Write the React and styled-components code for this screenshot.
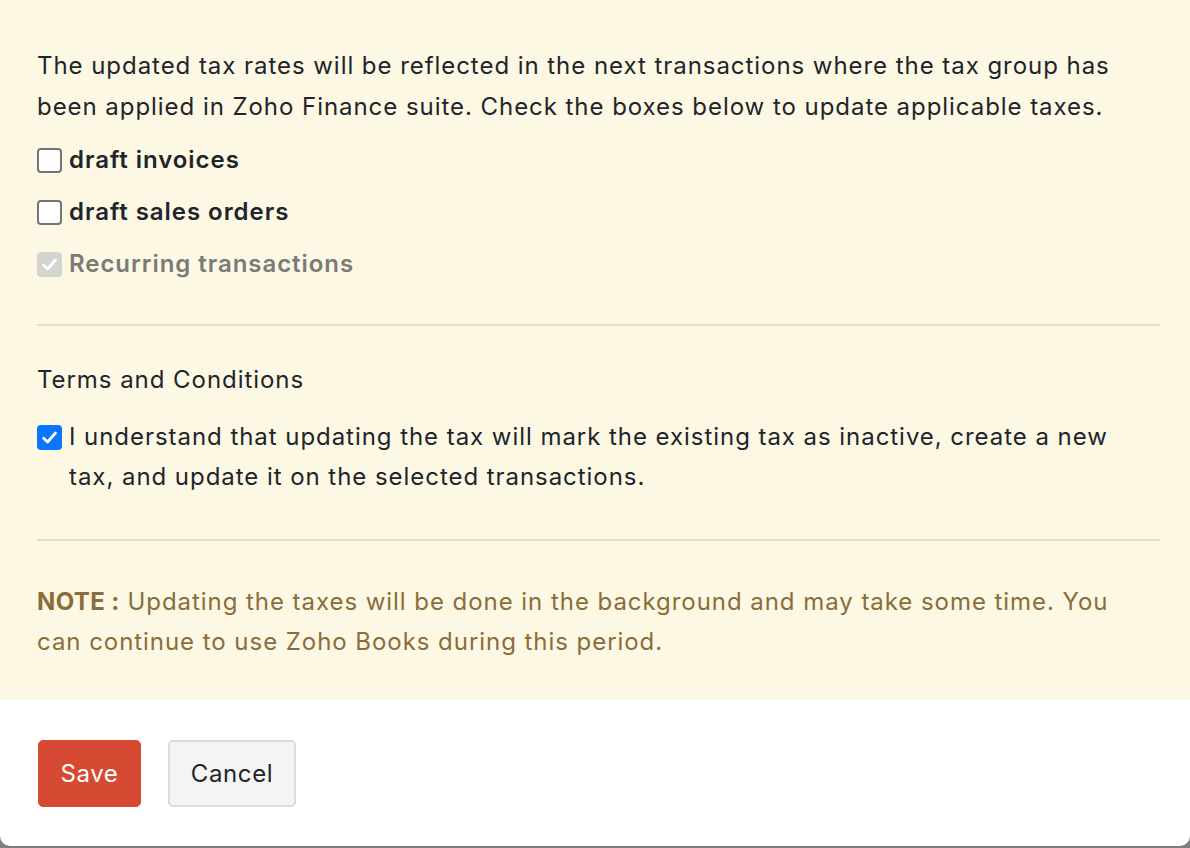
import { useState } from 'react';
import styled, { createGlobalStyle } from 'styled-components';

const GlobalStyle = createGlobalStyle`
  html, body {
    margin: 0;
    padding: 0;
    background: #7d7e82;
  }
  body {
    font-family: Inter, "Noto Sans", "Liberation Sans", sans-serif;
    color: #21252b;
  }
`;

const Dialog = styled.div`
  width: 1190px;
  height: 846px;
  background: #ffffff;
  border-radius: 0 0 10px 10px;
  overflow: hidden;
  display: flex;
  flex-direction: column;
`;

const WarningPanel = styled.div`
  background: #fcf8e3;
  padding: 46px 30px 37px 37px;
  font-size: 24px;
  line-height: 40.5px;
  letter-spacing: 0.95px;
`;

const Paragraph = styled.p`
  margin: 0;
`;

const OptionList = styled.div`
  margin-top: 7px;
  display: flex;
  flex-direction: column;
`;

const OptionRow = styled.label`
  display: flex;
  align-items: ${(p) => (p.$top ? 'flex-start' : 'center')};
  gap: 7px;
  min-height: ${(p) => (p.$top ? 'auto' : '52px')};
  margin-top: ${(p) => (p.$top ? '16px' : '0')};
  font-weight: ${(p) => (p.$bold ? 600 : 400)};
  color: ${(p) => (p.$disabled ? '#7a7a78' : '#21252b')};
  cursor: ${(p) => (p.$disabled ? 'default' : 'pointer')};
`;

const Box = styled.span`
  flex: none;
  width: 25px;
  height: 25px;
  box-sizing: border-box;
  border-radius: 4px;
  display: flex;
  align-items: center;
  justify-content: center;
  margin-top: ${(p) => (p.$top ? '8px' : '0')};
  border: ${(p) => (p.$checked ? 'none' : '2px solid #747474')};
  background: ${(p) =>
    !p.$checked ? '#ffffff' : p.$disabled ? '#d4d4d0' : '#0b75ff'};

  svg {
    width: 17px;
    height: 17px;
  }
`;

const Divider = styled.hr`
  border: none;
  height: 2px;
  background: #e2dfcc;
  margin: ${(p) => p.$margin};
`;

const SectionTitle = styled.div`
  font-weight: 400;
`;

const TermsText = styled.span`
  line-height: 40.5px;
`;

const Note = styled.p`
  margin: 0;
  color: #8a6d3b;
`;

const NoteLabel = styled.strong`
  font-weight: 700;
  letter-spacing: 0.4px;
`;

const Footer = styled.div`
  display: flex;
  gap: 27px;
  padding: 40px 38px 39px;
`;

const Button = styled.button`
  font-family: inherit;
  font-size: 24px;
  letter-spacing: 0.6px;
  height: 67px;
  padding: 0 20px;
  border-radius: 5px;
  cursor: pointer;
  border: ${(p) => (p.$primary ? '1px solid #d64a33' : '2px solid #dcdcdc')};
  background: ${(p) => (p.$primary ? '#d64a33' : '#f4f4f4')};
  color: ${(p) => (p.$primary ? '#ffffff' : '#21252b')};
  min-width: ${(p) => (p.$primary ? '103px' : '128px')};
`;

function Check({ checked, disabled, top, onToggle }) {
  return (
    <Box $checked={checked} $disabled={disabled} $top={top} onClick={onToggle}>
      {checked && (
        <svg viewBox="0 0 16 16" fill="none">
          <path
            d="M2.5 8.6 L6.2 12.2 L13.6 3.8"
            stroke="#ffffff"
            strokeWidth="2.6"
            strokeLinecap="round"
            strokeLinejoin="round"
          />
        </svg>
      )}
    </Box>
  );
}

export default function App() {
  const [invoices, setInvoices] = useState(false);
  const [salesOrders, setSalesOrders] = useState(false);
  const [agree, setAgree] = useState(true);

  return (
    <>
      <GlobalStyle />
      <Dialog>
        <WarningPanel>
          <Paragraph>
            The updated tax rates will be reflected in the next transactions where the tax group has
            <br />
            been applied in Zoho Finance suite. Check the boxes below to update applicable taxes.
          </Paragraph>
          <OptionList>
            <OptionRow $bold>
              <Check checked={invoices} onToggle={() => setInvoices(!invoices)} />
              draft invoices
            </OptionRow>
            <OptionRow $bold>
              <Check checked={salesOrders} onToggle={() => setSalesOrders(!salesOrders)} />
              draft sales orders
            </OptionRow>
            <OptionRow $bold $disabled>
              <Check checked disabled />
              Recurring transactions
            </OptionRow>
          </OptionList>

          <Divider $margin="34px 0 34px" />

          <SectionTitle>Terms and Conditions</SectionTitle>
          <OptionRow $top>
            <Check checked={agree} top onToggle={() => setAgree(!agree)} />
            <TermsText>
              I understand that updating the tax will mark the existing tax as inactive, create a new
              <br />
              tax, and update it on the selected transactions.
            </TermsText>
          </OptionRow>

          <Divider $margin="41px 0 41px" />

          <Note>
            <NoteLabel>NOTE :</NoteLabel> Updating the taxes will be done in the background and may take some time. You
            <br />
            can continue to use Zoho Books during this period.
          </Note>
        </WarningPanel>
        <Footer>
          <Button $primary>Save</Button>
          <Button>Cancel</Button>
        </Footer>
      </Dialog>
    </>
  );
}
